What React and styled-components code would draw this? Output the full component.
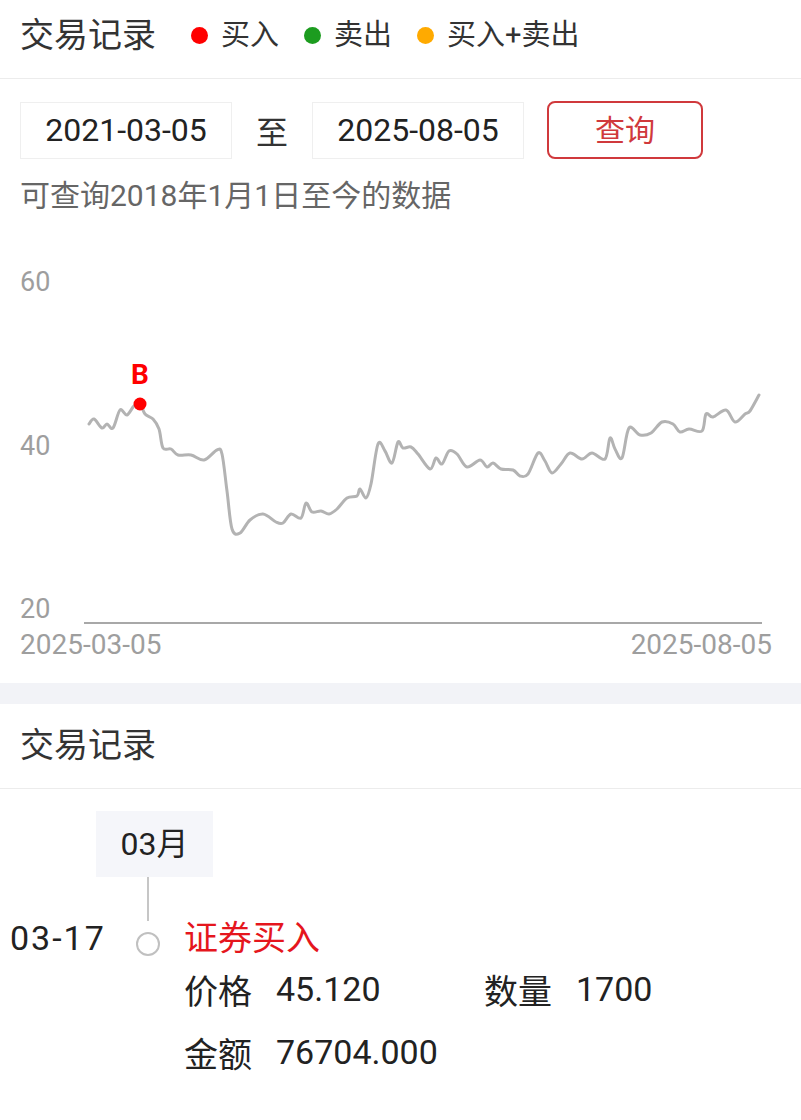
import React from "react";
import styled, { createGlobalStyle } from "styled-components";

const GlobalStyle = createGlobalStyle`
  html, body {
    margin: 0;
    padding: 0;
    background: #fff;
  }
  body {
    font-family: "Roboto", "Noto Sans CJK SC", sans-serif;
    color: #333;
  }
`;

const legend = [
  { color: "#ff0000", label: "买入" },
  { color: "#1c9c1f", label: "卖出" },
  { color: "#ffaa00", label: "买入+卖出" },
];

// price line, page coordinates
const points = [
  [89, 423], [94, 418], [102, 427], [107, 423], [113, 427], [120, 409], [127, 414],
  [134, 405], [140, 403], [145, 413], [153, 418], [159, 428], [163, 447], [171, 448],
  [178, 454], [191, 454], [204, 459], [217, 449], [222, 453], [227, 490], [232, 528],
  [240, 532], [250, 519], [263, 513], [276, 521], [283, 522], [291, 513], [301, 517],
  [306, 502], [312, 511], [321, 510], [329, 513], [337, 508], [347, 497], [357, 495],
  [360, 488], [366, 497], [371, 483], [378, 443], [385, 450], [392, 462], [398, 441],
  [403, 447], [411, 446], [418, 453], [430, 468], [436, 457], [442, 463], [449, 450],
  [457, 453], [467, 466], [480, 459], [487, 466], [493, 462], [501, 468], [513, 469],
  [520, 475], [528, 473], [538, 452], [545, 460], [552, 472], [561, 463], [570, 452],
  [582, 458], [592, 452], [605, 458], [610, 437], [615, 448], [622, 457], [629, 427],
  [640, 434], [651, 432], [662, 421], [673, 423], [680, 431], [689, 428], [702, 430],
  [706, 413], [713, 416], [726, 409], [735, 421], [745, 413], [750, 410], [759, 394],
];

function smoothPath(pts) {
  let d = `M${pts[0][0]},${pts[0][1]}`;
  for (let i = 0; i < pts.length - 1; i++) {
    const p0 = pts[i - 1] || pts[i];
    const p1 = pts[i];
    const p2 = pts[i + 1];
    const p3 = pts[i + 2] || p2;
    const c1x = p1[0] + (p2[0] - p0[0]) / 6;
    const c1y = p1[1] + (p2[1] - p0[1]) / 6;
    const c2x = p2[0] - (p3[0] - p1[0]) / 6;
    const c2y = p2[1] - (p3[1] - p1[1]) / 6;
    d += ` C${c1x.toFixed(1)},${c1y.toFixed(1)} ${c2x.toFixed(1)},${c2y.toFixed(1)} ${p2[0]},${p2[1]}`;
  }
  return d;
}

function PriceChart() {
  return (
    <ChartSvg viewBox="0 215 801 467" width="801" height="467">
      <g fill="#9e9e9e" fontSize="27" fontFamily="Roboto, sans-serif">
        <text x="20" y="281" dominantBaseline="central">60</text>
        <text x="20" y="445" dominantBaseline="central">40</text>
        <text x="20" y="608" dominantBaseline="central">20</text>
      </g>
      <line x1="84" y1="622" x2="762" y2="622" stroke="#a8a8a8" strokeWidth="2" />
      <g fill="#9e9e9e" fontSize="28" fontFamily="Roboto, sans-serif">
        <text x="20" y="643" dominantBaseline="central">2025-03-05</text>
        <text x="772" y="643" dominantBaseline="central" textAnchor="end">
          2025-08-05
        </text>
      </g>
      <path
        d={smoothPath(points)}
        fill="none"
        stroke="#b3b3b3"
        strokeWidth="3"
        strokeLinejoin="round"
        strokeLinecap="round"
      />
      <circle cx="140" cy="403" r="6.5" fill="#ff0000" />
      <text
        x="140"
        y="373"
        dominantBaseline="central"
        textAnchor="middle"
        fill="#ff0000"
        fontSize="28"
        fontWeight="700"
        fontFamily="Roboto, sans-serif"
      >
        B
      </text>
    </ChartSvg>
  );
}

function App() {
  return (
    <Page>
      <GlobalStyle />
      <Header>
        <Title>交易记录</Title>
        <Legend>
          {legend.map((item) => (
            <LegendItem key={item.label}>
              <Dot $color={item.color} />
              {item.label}
            </LegendItem>
          ))}
        </Legend>
      </Header>

      <QueryRow>
        <DateBox>2021-03-05</DateBox>
        <To>至</To>
        <DateBox>2025-08-05</DateBox>
        <QueryButton>查询</QueryButton>
      </QueryRow>
      <Hint>可查询2018年1月1日至今的数据</Hint>

      <PriceChart />

      <Band />

      <SectionHeader>
        <Title>交易记录</Title>
      </SectionHeader>

      <Timeline>
        <MonthTag>03月</MonthTag>
        <Connector />
        <Entry>
          <EntryDate>03-17</EntryDate>
          <Node />
          <EntryBody>
            <EntryType>证券买入</EntryType>
            <Details>
              <Field>
                <FieldLabel>价格</FieldLabel>
                <FieldValue>45.120</FieldValue>
              </Field>
              <Field>
                <FieldLabel>数量</FieldLabel>
                <FieldValue>1700</FieldValue>
              </Field>
              <Field>
                <FieldLabel>金额</FieldLabel>
                <FieldValue>76704.000</FieldValue>
              </Field>
            </Details>
          </EntryBody>
        </Entry>
      </Timeline>
    </Page>
  );
}

const Page = styled.div`
  width: 801px;
  min-height: 1120px;
  background: #fff;
`;

const Header = styled.div`
  box-sizing: border-box;
  height: 79px;
  padding: 0 20px 8px;
  display: flex;
  align-items: center;
  border-bottom: 1px solid #ececec;
`;

const Title = styled.div`
  font-size: 34px;
  line-height: 40px;
  color: #333;
`;

const Legend = styled.div`
  display: flex;
  align-items: center;
  gap: 25px;
  margin-left: 35px;
`;

const LegendItem = styled.div`
  display: flex;
  align-items: center;
  gap: 13px;
  font-size: 29px;
  line-height: 36px;
  color: #333;
`;

const Dot = styled.span`
  width: 17px;
  height: 17px;
  border-radius: 50%;
  background: ${(p) => p.$color};
`;

const QueryRow = styled.div`
  display: flex;
  align-items: center;
  margin-top: 22px;
  padding: 0 20px;
`;

const DateBox = styled.div`
  box-sizing: border-box;
  width: 212px;
  height: 57px;
  border: 1.5px solid #efefef;
  display: flex;
  align-items: center;
  justify-content: center;
  font-size: 32px;
  color: #222;
`;

const To = styled.div`
  font-size: 32px;
  color: #333;
  margin: 0 24px;
`;

const QueryButton = styled.button`
  box-sizing: border-box;
  width: 156px;
  height: 58px;
  margin-left: 23px;
  border: 2px solid #d0393c;
  border-radius: 8px;
  background: #fff;
  color: #d0393c;
  font-family: "Roboto", "Noto Sans CJK SC", sans-serif;
  font-size: 30px;
  padding: 0 0 4px;
`;

const Hint = styled.div`
  margin-top: 17px;
  padding: 0 20px;
  font-size: 30px;
  line-height: 40px;
  color: #666;
`;

const ChartSvg = styled.svg`
  display: block;
`;

const Band = styled.div`
  height: 21px;
  background: #f2f3f7;
`;

const SectionHeader = styled.div`
  box-sizing: border-box;
  height: 85px;
  padding: 0 20px 2px;
  display: flex;
  align-items: center;
  border-bottom: 1px solid #ececec;
`;

const Timeline = styled.div`
  padding-top: 22px;
  padding-bottom: 40px;
`;

const MonthTag = styled.div`
  box-sizing: border-box;
  width: 117px;
  height: 66px;
  margin-left: 96px;
  padding-bottom: 6px;
  background: #f5f6fa;
  display: flex;
  align-items: center;
  justify-content: center;
  font-size: 32px;
  color: #222;
`;

const Connector = styled.div`
  width: 2px;
  height: 44px;
  margin-left: 147px;
  background: #c6c6c6;
`;

const Entry = styled.div`
  display: flex;
  align-items: flex-start;
  padding-left: 10px;
`;

const EntryDate = styled.div`
  width: 126px;
  font-size: 34px;
  letter-spacing: 2px;
  line-height: 34px;
  color: #222;
`;

const Node = styled.div`
  box-sizing: border-box;
  width: 24px;
  height: 24px;
  margin-top: 11px;
  margin-right: 24px;
  border: 2px solid #c0c0c0;
  border-radius: 50%;
  flex: none;
`;

const EntryBody = styled.div`
  display: flex;
  flex-direction: column;
`;

const EntryType = styled.div`
  font-size: 34px;
  line-height: 34px;
  color: #e5161d;
`;

const Details = styled.div`
  display: grid;
  grid-template-columns: 300px auto;
  row-gap: 19px;
  margin-top: 12px;
`;

const Field = styled.div`
  display: flex;
  align-items: center;
  height: 44px;
  font-size: 34px;
  color: #222;
`;

const FieldLabel = styled.span`
  margin-right: 24px;
`;

const FieldValue = styled.span``;

export default App;
